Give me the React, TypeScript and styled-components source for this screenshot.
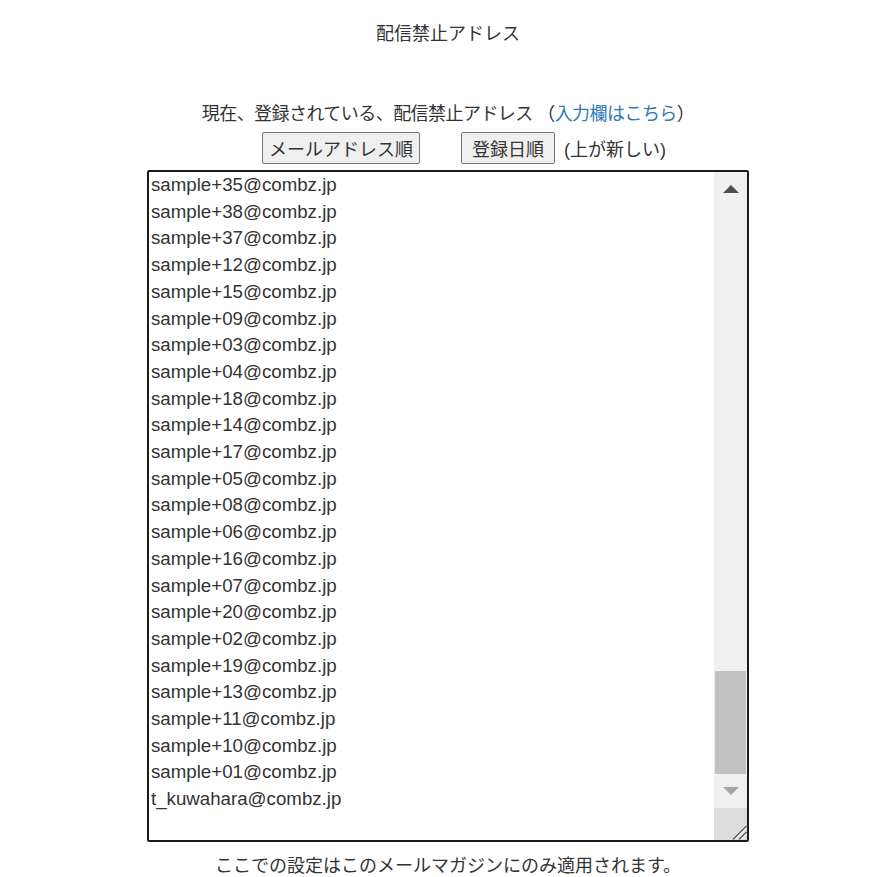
import styled, { createGlobalStyle } from 'styled-components';

const addresses = [
  'sample+35@combz.jp',
  'sample+38@combz.jp',
  'sample+37@combz.jp',
  'sample+12@combz.jp',
  'sample+15@combz.jp',
  'sample+09@combz.jp',
  'sample+03@combz.jp',
  'sample+04@combz.jp',
  'sample+18@combz.jp',
  'sample+14@combz.jp',
  'sample+17@combz.jp',
  'sample+05@combz.jp',
  'sample+08@combz.jp',
  'sample+06@combz.jp',
  'sample+16@combz.jp',
  'sample+07@combz.jp',
  'sample+20@combz.jp',
  'sample+02@combz.jp',
  'sample+19@combz.jp',
  'sample+13@combz.jp',
  'sample+11@combz.jp',
  'sample+10@combz.jp',
  'sample+01@combz.jp',
  't_kuwahara@combz.jp',
];

const App = () => {
  return (
    <Page>
      <GlobalStyle />
      <Title>配信禁止アドレス</Title>

      <Notice>
        現在、登録されている、配信禁止アドレス （<Link href="#input">入力欄はこちら</Link>）
      </Notice>

      <SortRow>
        <SortButton type="button" $pad={6}>メールアドレス順</SortButton>
        <SortButton type="button" $pad={10} $gap>登録日順</SortButton>
        <SortHint>(上が新しい)</SortHint>
      </SortRow>

      <ListBox>
        <Lines>
          {addresses.map((a) => (
            <Line key={a}>{a}</Line>
          ))}
        </Lines>

        <Scrollbar>
          <ArrowButton>
            <Arrow $dir="up" />
          </ArrowButton>
          <Track>
            <Thumb />
          </Track>
          <ArrowButton>
            <Arrow $dir="down" />
          </ArrowButton>
          <Corner>
            {/* resize grip */}
            <svg width="16" height="16" viewBox="0 0 16 16">
              <line x1="15.5" y1="2" x2="2" y2="15.5" stroke="#555" strokeWidth="1.3" />
              <line x1="15.5" y1="4" x2="4" y2="15.5" stroke="#fff" strokeWidth="1" />
              <line x1="15.5" y1="8" x2="8" y2="15.5" stroke="#555" strokeWidth="1.3" />
              <line x1="15.5" y1="10" x2="10" y2="15.5" stroke="#fff" strokeWidth="1" />
            </svg>
          </Corner>
        </Scrollbar>
      </ListBox>

      <Footer>ここでの設定はこのメールマガジンにのみ適用されます。</Footer>
    </Page>
  );
};

export default App;

const GlobalStyle = createGlobalStyle`
  html, body {
    margin: 0;
    padding: 0;
    background: #fff;
  }
  body {
    font-family: "Liberation Sans", "Noto Sans CJK JP", sans-serif;
    color: #333;
  }
`;

const Page = styled.div`
  width: 892px;
  box-sizing: border-box;
  padding-left: 4px;
  display: flex;
  flex-direction: column;
  align-items: center;
`;

const Title = styled.div`
  margin-top: 21px;
  font-size: 18px;
  line-height: 26px;
`;

const Notice = styled.div`
  margin-top: 54px;
  font-size: 18px;
  line-height: 26px;
  letter-spacing: -0.55px;
`;

const Link = styled.a`
  color: #337ab7;
  text-decoration: none;
`;

const SortRow = styled.div`
  margin-top: 5px;
  display: flex;
  align-items: center;
  padding-left: 32px;
`;

const SortButton = styled.button<{ $gap?: boolean; $pad: number }>`
  margin-left: ${({ $gap }) => ($gap ? '41px' : '0')};
  height: 32px;
  padding: 0 ${({ $pad }) => $pad}px;
  font-family: "Liberation Sans", "Noto Sans CJK JP", sans-serif;
  font-size: 18px;
  color: #333;
  background: #efefef;
  border: 1px solid #767676;
  border-radius: 2px;
`;

const SortHint = styled.span`
  margin-left: 9px;
  font-size: 18px;
`;

const ListBox = styled.div`
  margin-top: 6px;
  width: 602px;
  height: 672px;
  box-sizing: border-box;
  border: 2px solid #1a1a1a;
  border-radius: 2px;
  display: flex;
  overflow: hidden;
`;

const Lines = styled.div`
  flex: 1;
  padding-left: 2px;
  overflow: hidden;
`;

const Line = styled.div`
  font-size: 18.7px;
  line-height: 26.7px;
  white-space: nowrap;
`;

const Scrollbar = styled.div`
  width: 33px;
  display: flex;
  flex-direction: column;
  background: #f0f0f0;
`;

const ArrowButton = styled.div`
  height: 34px;
  display: flex;
  align-items: center;
  justify-content: center;
`;

const Arrow = styled.div<{ $dir: 'up' | 'down' }>`
  width: 0;
  height: 0;
  border-left: 8px solid transparent;
  border-right: 8px solid transparent;
  ${({ $dir }) =>
    $dir === 'up'
      ? 'border-bottom: 8px solid #505050;'
      : 'border-top: 8px solid #a3a3a3;'}
`;

const Track = styled.div`
  flex: 1;
  display: flex;
  flex-direction: column;
  justify-content: flex-end;
`;

const Thumb = styled.div`
  height: 103px;
  margin: 0 1px;
  background: #c1c1c1;
`;

const Corner = styled.div`
  height: 32px;
  background: #dcdcdc;
  display: flex;
  align-items: flex-end;
  justify-content: flex-end;
`;

const Footer = styled.div`
  margin-top: 12px;
  font-size: 18px;
  line-height: 24px;
`;
